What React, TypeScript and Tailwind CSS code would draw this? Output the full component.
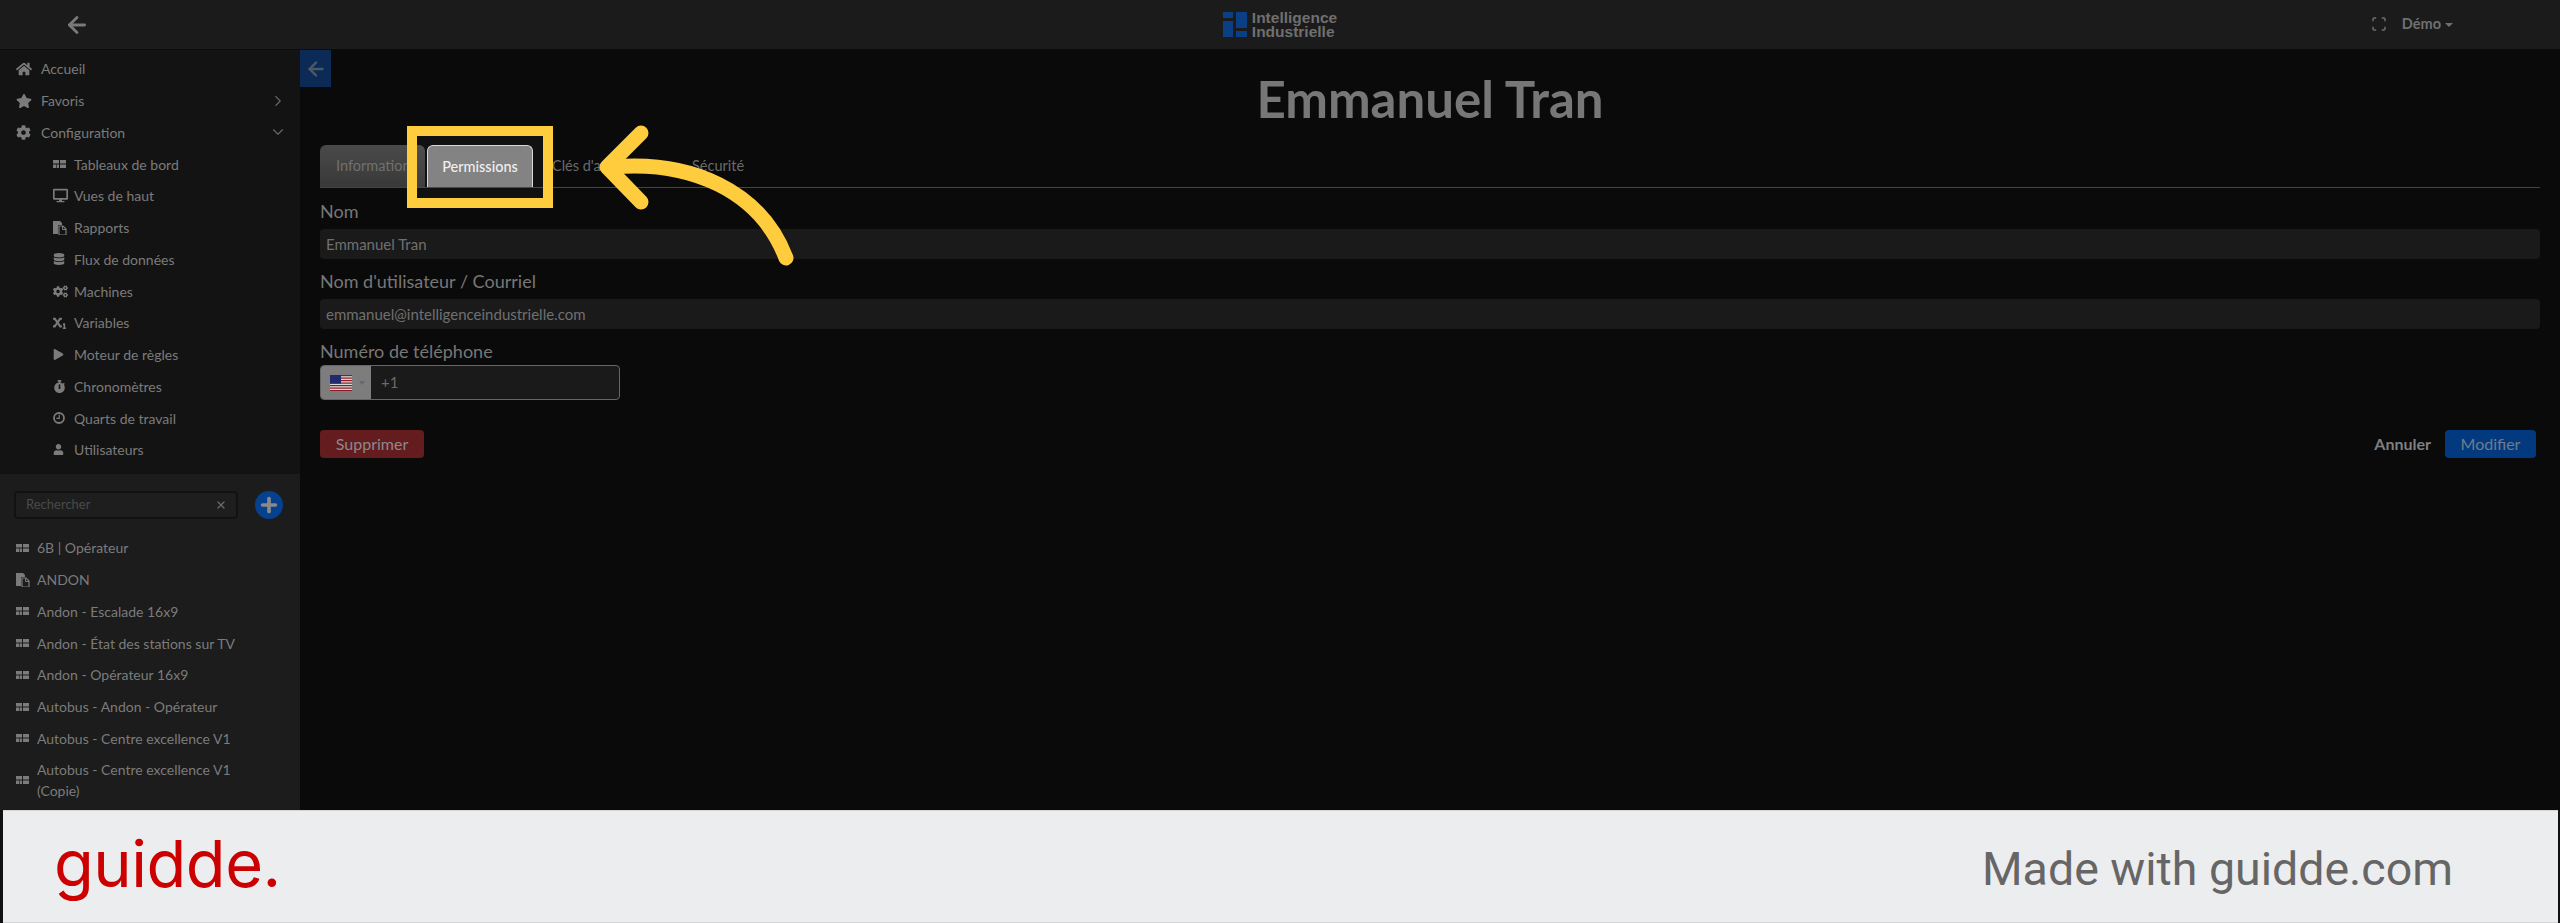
import { ArrowLeft, ChevronDown, ChevronRight, Plus, Scan, X } from "lucide-react";
import {
  FaCogs,
  FaCog,
  FaDatabase,
  FaDesktop,
  FaHome,
  FaPlay,
  FaStar,
  FaStopwatch,
  FaSubscript,
  FaUser,
} from "react-icons/fa";
import type { ReactNode } from "react";

const DashIcon = () => (
  <svg width="13" height="8" viewBox="0 0 13 8" fill="currentColor">
    <rect x="0" y="0" width="6" height="3.5" />
    <rect x="7" y="0" width="6" height="3.5" />
    <rect x="0" y="4.5" width="3" height="3.5" />
    <rect x="3.6" y="4.5" width="2.4" height="3.5" />
    <rect x="7" y="4.5" width="6" height="3.5" />
  </svg>
);

const ReportIcon = () => (
  <svg width="14" height="14" viewBox="0 0 14 14" fill="currentColor">
    <path d="M0 0h7l2 2v2H5v9H0z" />
    <path d="M6 5h4l3 3v6H6z" fill="none" stroke="currentColor" strokeWidth="1.2" />
    <path d="M9.5 5v3.5H13" fill="none" stroke="currentColor" strokeWidth="1" />
  </svg>
);

const ClockIcon = () => (
  <svg width="12" height="12" viewBox="0 0 12 12" fill="none" stroke="currentColor">
    <circle cx="6" cy="6" r="5" strokeWidth="1.8" />
    <path d="M6.3 2.8V6.4H3.4" strokeWidth="1.2" />
  </svg>
);

const config: { icon: ReactNode; label: string }[] = [
  { icon: <DashIcon />, label: "Tableaux de bord" },
  { icon: <FaDesktop size={15} />, label: "Vues de haut" },
  { icon: <ReportIcon />, label: "Rapports" },
  { icon: <FaDatabase size={12} />, label: "Flux de données" },
  { icon: <FaCogs size={15} />, label: "Machines" },
  { icon: <FaSubscript size={13} />, label: "Variables" },
  { icon: <FaPlay size={11} />, label: "Moteur de règles" },
  { icon: <FaStopwatch size={13} />, label: "Chronomètres" },
  { icon: <ClockIcon />, label: "Quarts de travail" },
  { icon: <FaUser size={11} />, label: "Utilisateurs" },
];

const favorites: { icon: ReactNode; label: string }[] = [
  { icon: <DashIcon />, label: "6B | Opérateur" },
  { icon: <ReportIcon />, label: "ANDON" },
  { icon: <DashIcon />, label: "Andon - Escalade 16x9" },
  { icon: <DashIcon />, label: "Andon - État des stations sur TV" },
  { icon: <DashIcon />, label: "Andon - Opérateur 16x9" },
  { icon: <DashIcon />, label: "Autobus - Andon - Opérateur" },
  { icon: <DashIcon />, label: "Autobus - Centre excellence V1" },
  { icon: <DashIcon />, label: "Autobus - Centre excellence V1 (Copie)" },
];

const TopItem = ({ icon, label, chevron }: { icon: ReactNode; label: string; chevron?: ReactNode }) => (
  <div className="flex h-[31.75px] items-center pl-4 pr-[13px]">
    <span className="flex w-[25px] shrink-0 items-center">{icon}</span>
    <span className="flex-1">{label}</span>
    {chevron}
  </div>
);

const Field = ({ label, value }: { label: string; value: string }) => (
  <div>
    <div className="text-[18px] leading-[22px] text-[#777]">{label}</div>
    <div className="mt-[7px] flex h-[30px] items-center rounded-[4px] bg-[#1a1a1a] pl-[6px] text-[15px] text-[#707070]">
      {value}
    </div>
  </div>
);

const Flag = () => (
  <svg width="22" height="16" viewBox="0 0 22 16">
    <rect width="22" height="16" fill="#d8d8d8" />
    {[0, 2.5, 5, 7.5, 10, 12.5, 15].map((y) => (
      <rect key={y} y={y} width="22" height="1.2" fill="#8c1c24" />
    ))}
    <rect width="11" height="8.6" fill="#232a6e" />
  </svg>
);

export default function App() {
  return (
    <div className="relative flex h-[923px] w-[2560px] flex-col overflow-hidden bg-[#0a0a0a] font-['Lato',sans-serif]">
      <header className="grid h-[50px] shrink-0 grid-cols-3 items-center border-b border-[#0c0c0c] bg-[#1b1b1b]">
        <div className="pl-[64px]">
          <ArrowLeft size={26} strokeWidth={2.6} className="text-[#7a7a7a]" />
        </div>
        <div className="flex items-center justify-center gap-[5px]">
          <svg width="24" height="25" viewBox="0 0 24 25" fill="#0a3f86">
            <rect x="0" y="0" width="10" height="6" />
            <rect x="0" y="9" width="10" height="16" />
            <rect x="13" y="0" width="11" height="16" />
            <rect x="13" y="19" width="11" height="6" />
          </svg>
          <div className="font-['Liberation_Sans',sans-serif] text-[15.5px] leading-[13.5px] font-bold text-[#6f6f6f]">
            <div>Intelligence</div>
            <div>Industrielle</div>
          </div>
        </div>
        <div className="flex items-center justify-end gap-[15px] pr-[107px] pb-[1px] text-[14.5px] font-bold text-[#707070]">
          <Scan size={16} strokeWidth={2.2} />
          <span className="flex items-center gap-[4px]">
            Démo
            <span className="mt-[1px] border-x-[4px] border-t-[4px] border-x-transparent border-t-[#707070]" />
          </span>
        </div>
      </header>

      <div className="flex min-h-0 flex-1">
        <aside className="flex w-[300px] shrink-0 flex-col text-[14px] text-[#7b7b7b]">
          <nav className="h-[424px] shrink-0 bg-[#131313] pt-[3px]">
            <TopItem icon={<FaHome size={16} />} label="Accueil" />
            <TopItem
              icon={<FaStar size={16} />}
              label="Favoris"
              chevron={<ChevronRight size={18} strokeWidth={1.5} className="text-[#666]" />}
            />
            <TopItem
              icon={<FaCog size={15} />}
              label="Configuration"
              chevron={<ChevronDown size={18} strokeWidth={1.5} className="text-[#666]" />}
            />
            {config.map((item) => (
              <div key={item.label} className="flex h-[31.75px] items-center pl-[53px]">
                <span className="flex w-[21px] shrink-0 items-center">{item.icon}</span>
                <span className="text-[14px]">{item.label}</span>
              </div>
            ))}
          </nav>
          <div className="min-h-0 flex-1 overflow-hidden bg-[#1c1c1c] pt-[17px]">
            <div className="flex items-center pl-[14px]">
              <div className="flex h-[28px] w-[224px] items-center rounded-[4px] border-2 border-[#121212] bg-[#1e1e1e] pr-[9px] pl-[10px] text-[13px] text-[#4a4a4a]">
                <span className="flex-1">Rechercher</span>
                <X size={12} strokeWidth={2.5} className="text-[#6a6a6a]" />
              </div>
              <div className="ml-[17px] flex h-[28px] w-[28px] items-center justify-center rounded-full bg-[#05418f]">
                <Plus size={22} strokeWidth={4} className="text-[#8a8a8a]" />
              </div>
            </div>
            <div className="mt-[13px]">
              {favorites.map((item) => (
                <div key={item.label} className="flex min-h-[31.75px] items-center py-[5px] pr-[30px] pl-[16px]">
                  <span className="flex w-[21px] shrink-0 items-center">{item.icon}</span>
                  <span className="leading-[21px]">{item.label}</span>
                </div>
              ))}
            </div>
          </div>
        </aside>

        <main className="relative min-w-0 flex-1 px-[20px]">
          <div className="absolute top-0 left-0 flex h-[37px] w-[31px] items-center justify-center bg-[#0b2a55]">
            <ArrowLeft size={22} strokeWidth={2.6} className="text-[#4d5866]" />
          </div>
          <h1 className="pt-[20px] text-center text-[51px] leading-[58px] font-bold text-[#777]">Emmanuel Tran</h1>

          <div className="mt-[18px] flex h-[42px] items-end border-b border-[#444] text-[14.5px]">
            <div className="flex h-[42px] w-[105px] items-center rounded-t-[6px] bg-gradient-to-b from-[#4a4a4a] to-[#383838] pl-[16px] text-[#707070]">
              Informations
            </div>
            <div className="ml-[2px] flex h-[42px] w-[106px] items-center justify-center rounded-t-[6px] border border-b-0 border-[#d8d8d8] bg-[#7f7f7f] font-medium text-[#f0f0f0]">
              Permissions
            </div>
            <div className="ml-[19px] flex h-[42px] w-[140px] items-center text-[#6a6a6a]">Clés d'accès</div>
            <div className="flex h-[42px] items-center text-[#6a6a6a]">Sécurité</div>
          </div>

          <div className="mt-[12px] flex flex-col gap-[11px]">
            <Field label="Nom" value="Emmanuel Tran" />
            <Field label="Nom d'utilisateur / Courriel" value="emmanuel@intelligenceindustrielle.com" />
            <div>
              <div className="text-[18px] leading-[22px] text-[#777]">Numéro de téléphone</div>
              <div className="mt-[3px] flex h-[35px] w-[300px] overflow-hidden rounded-[4px] border border-[#666] bg-[#1a1a1a]">
                <div className="flex w-[50px] items-center gap-[7px] bg-[#7d7d7d] pl-[9px]">
                  <Flag />
                  <span className="border-x-[3px] border-t-[4px] border-x-transparent border-t-[#5d6880]" />
                </div>
                <div className="flex items-center pl-[10px] text-[15px] text-[#6a6a6a]">+1</div>
              </div>
            </div>
          </div>

          <div className="mt-[30px] flex items-center justify-between pr-[4px]">
            <button className="h-[28px] w-[104px] rounded-[4px] bg-[#641c1f] text-[16px] text-[#8a8a8a]">Supprimer</button>
            <div className="flex items-center gap-[14px]">
              <span className="text-[16px] font-bold text-[#7f7f7f]">Annuler</span>
              <button className="h-[28px] w-[91px] rounded-[4px] bg-[#03397f] text-[16px] text-[#6f7c8c]">Modifier</button>
            </div>
          </div>
        </main>
      </div>

      <footer className="flex h-[113px] shrink-0 bg-[#111]">
        <div className="mr-[2px] ml-[3px] flex flex-1 items-center justify-between border-y border-[#d4d4d4] bg-[#ecedef] pr-[105px] pl-[51px]">
          <span className="pb-[6px] font-['Inter',sans-serif] text-[65px] leading-none tracking-[-0.5px] text-[#cc0000]">guidde.</span>
          <span className="pt-[6px] font-['Roboto',sans-serif] text-[46.5px] leading-none text-[#666]">Made with guidde.com</span>
        </div>
      </footer>

      {/* annotation over the tabs */}
      <div className="absolute top-[126px] left-[407px] h-[82px] w-[146px] border-[10px] border-[#ffcc3d] bg-white/[0.03]" />
      <svg className="absolute top-0 left-0" width="2560" height="923" fill="none" stroke="#ffcc3d" strokeWidth="15" strokeLinecap="round" strokeLinejoin="round">
        <path d="M786 258 C760 190 690 160 612 167" />
        <path d="M641 133 L607 167 L641 202" />
      </svg>
    </div>
  );
}
